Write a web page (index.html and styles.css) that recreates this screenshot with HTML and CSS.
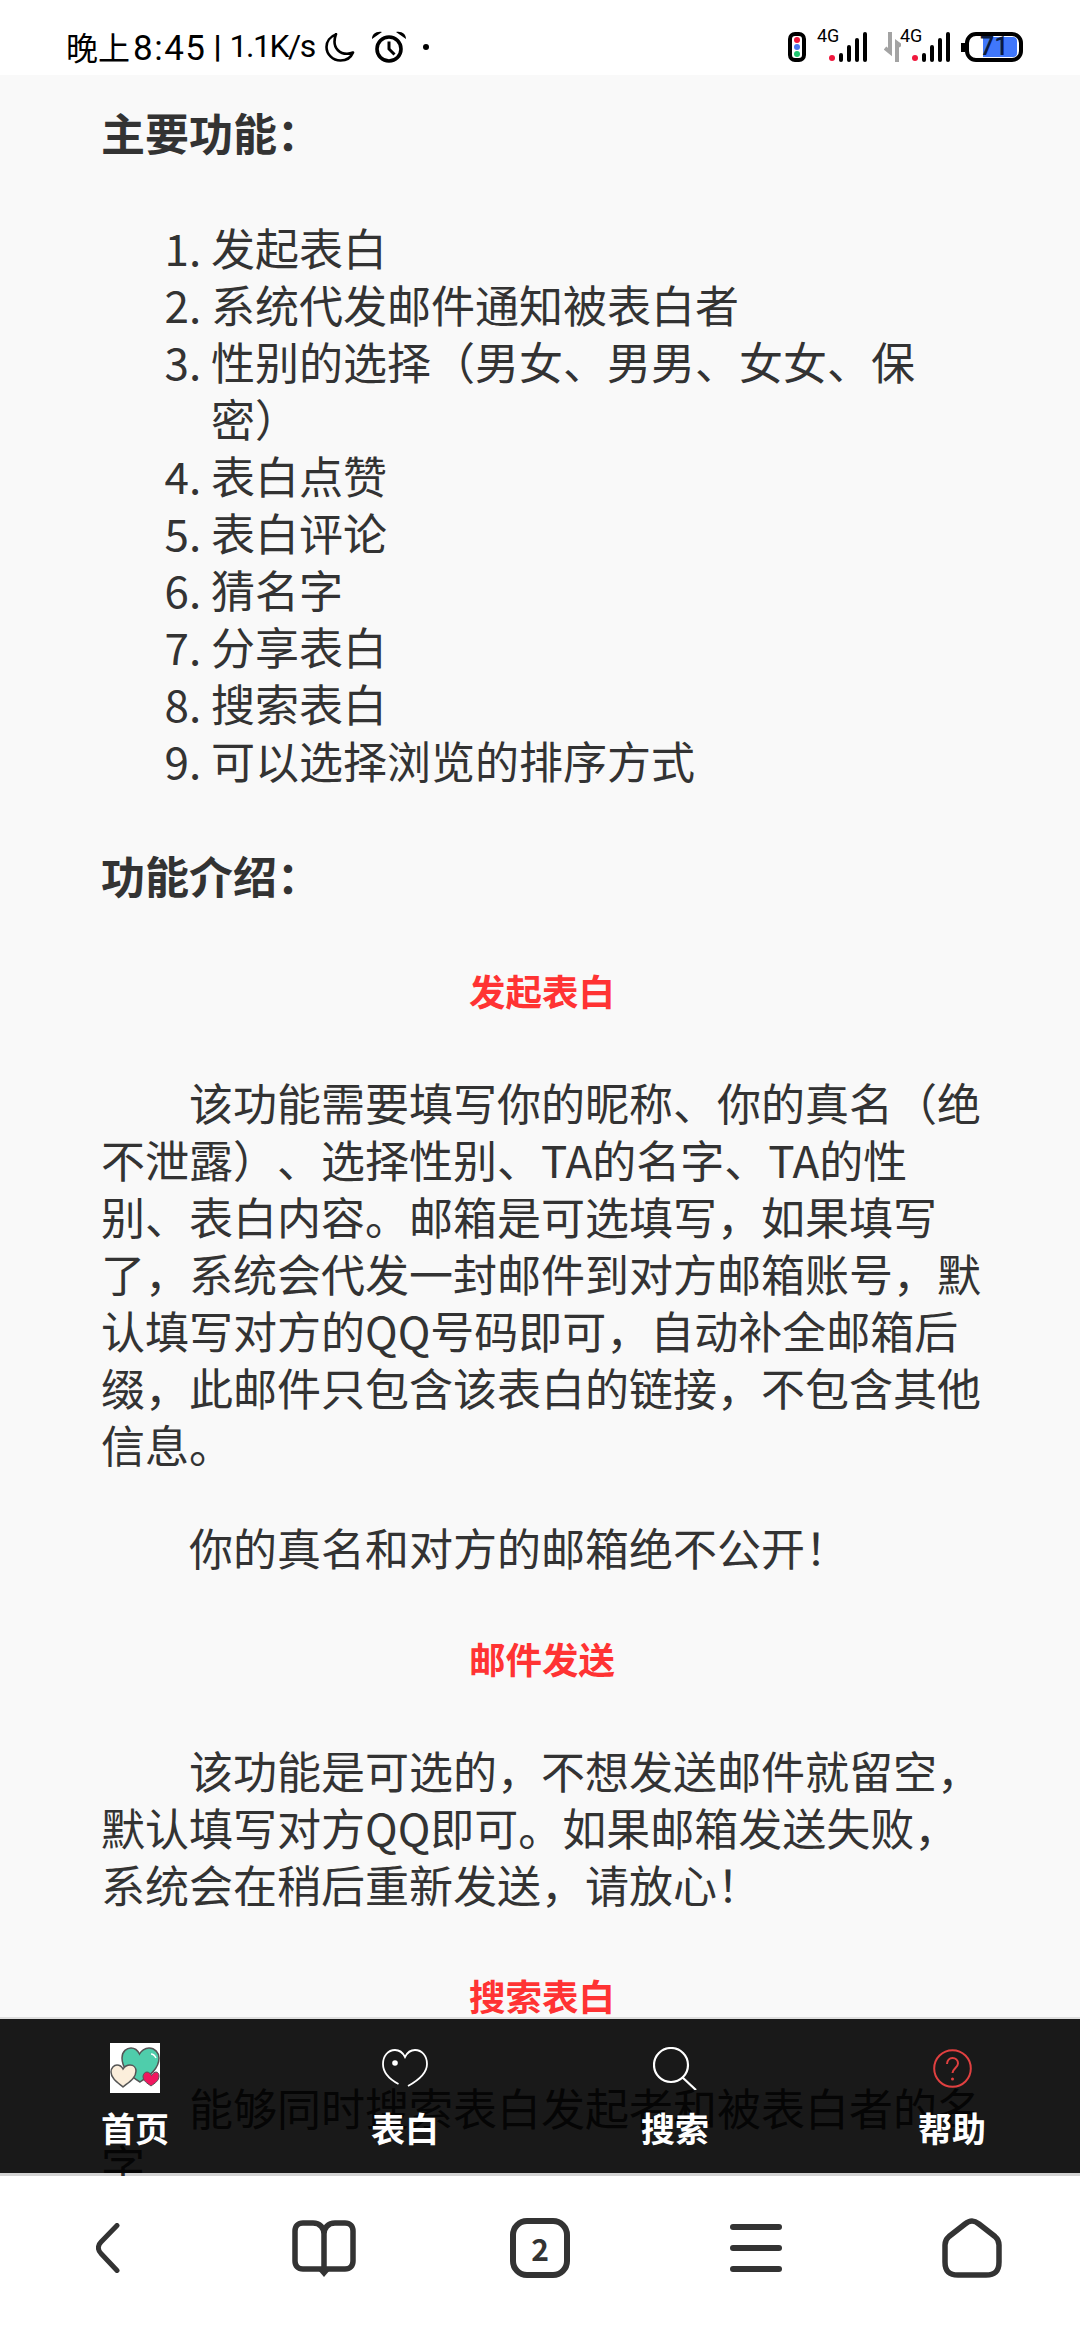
FILE: index.html
```html
<!DOCTYPE html>
<html>
<head lang="zh">
    <meta charset="UTF-8">
    <title>帮助</title>
    <link rel="stylesheet" href="styles.css">
</head>
<body>
<div id="status">
    <div class="status-left">
        <span class="clock">晚上<span class="digits">8:45</span></span>
        <span class="sep">|</span>
        <span class="speed">1.1K/s</span>
        <svg class="moon" width="30" height="29" viewBox="0 0 30 29"><path d="M11 1.500C5 3.500 1.500 8.500 1.500 14c0 7 6 13.500 14 13.500 5.500 0 10.500-3 12.500-8-2 1-4 1.300-6 1.300-7.500 0-12.500-5.500-12.500-12 0-2.500.5-5 1.500-7.800z" fill="none" stroke="#000" stroke-width="2.600" stroke-linejoin="round"/></svg>
        <svg class="alarm" width="34" height="32" viewBox="0 0 34 32"><circle cx="17" cy="18" r="12" fill="none" stroke="#000" stroke-width="3.600"/><path d="M17 10.500V18l5.500 5.500" fill="none" stroke="#000" stroke-width="3"/><path d="M0 8C0 3 4 0 10 1zM34 8c0-5-4-8-10-7z" fill="#000"/></svg>
        <span class="dot"></span>
    </div>
    <div class="status-right">
        <svg class="light" width="18" height="30" viewBox="0 0 18 30"><rect x="2" y="2" width="14" height="26" rx="5" fill="#fff" stroke="#000" stroke-width="4"/><circle cx="9" cy="8" r="3" fill="#f0173c"/><circle cx="9" cy="15" r="3" fill="#4a76f0"/><circle cx="9" cy="22" r="3" fill="#1fc56e"/></svg>
        <div class="signal">
            <svg width="52" height="34" viewBox="0 0 52 34"><circle cx="15" cy="30" r="3" fill="#f0173c"/><rect x="22" y="25" width="4" height="9" rx="2"/><rect x="30" y="17" width="4" height="17" rx="2"/><rect x="38" y="10" width="4" height="24" rx="2"/><rect x="46" y="4" width="4" height="30" rx="2"/></svg>
            <span class="net">4G</span>
        </div>
        <svg class="arrows" width="17" height="30" viewBox="0 0 17 30"><path d="M6 0v20L1 16M13 30V11l4 3" fill="none" stroke="#a3a3a3" stroke-width="4"/></svg>
        <div class="signal signal-two">
            <svg width="52" height="34" viewBox="0 0 52 34"><circle cx="15" cy="30" r="3" fill="#f0173c"/><rect x="22" y="25" width="4" height="9" rx="2"/><rect x="30" y="17" width="4" height="17" rx="2"/><rect x="38" y="10" width="4" height="24" rx="2"/><rect x="46" y="4" width="4" height="30" rx="2"/></svg>
            <span class="net">4G</span>
        </div>
        <div class="battery">
            <span class="cap"></span>
            <div class="shell">
                <div class="level"></div>
                <span class="num">71</span>
            </div>
        </div>
    </div>
</div>

<div id="page">
    <div id="content">
        <h3 class="first">主要功能：</h3>
        <ol>
            <li>发起表白</li>
            <li>系统代发邮件通知被表白者</li>
            <li>性别的选择（男女、男男、女女、保密）</li>
            <li>表白点赞</li>
            <li>表白评论</li>
            <li>猜名字</li>
            <li>分享表白</li>
            <li>搜索表白</li>
            <li>可以选择浏览的排序方式</li>
        </ol>
        <h3>功能介绍：</h3>
        <h4>发起表白</h4>
        <p>该功能需要填写你的昵称、你的真名（绝不泄露）、选择性别、TA的名字、TA的性别、表白内容。邮箱是可选填写，如果填写了，系统会代发一封邮件到对方邮箱账号，默认填写对方的QQ号码即可，自动补全邮箱后缀，此邮件只包含该表白的链接，不包含其他信息。</p>
        <p>你的真名和对方的邮箱绝不公开！</p>
        <h4>邮件发送</h4>
        <p>该功能是可选的，不想发送邮件就留空，默认填写对方QQ即可。如果邮箱发送失败，系统会在稍后重新发送，请放心！</p>
        <h4>搜索表白</h4>
        <p>能够同时搜索表白发起者和被表白者的名字</p>
    </div>
    <div id="tabbar">
        <div class="tab">
            <div class="tab-icon">
                <svg width="50" height="50" viewBox="0 0 50 50">
                    <rect width="50" height="50" fill="#fff"/>
                    <path d="M30 39C20 33 12 26 12 15 12 8 17 5 21 5c4 0 7 3 8.500 6C31 8 35 5 39 5c6 0 10 5 10 10 0 11-10 18-19 24z" fill="#4fcdab" stroke="#555" stroke-width="1.500"/>
                    <path d="M41 11c2 0 4 2 5 4" fill="none" stroke="#fff" stroke-width="1.500"/>
                    <path d="M13 44C7 39 1 35 1 29c0-4 3-7 6-7 3 0 5 2 6 4 2-3 4-4 7-4 4 0 6 3 6 6 0 7-7 11-13 16z" fill="#fbeedb" stroke="#555" stroke-width="1.500"/>
                    <path d="M41 43c-4-3-8-5-8-9.500 0-2.500 2-4.500 4-4.500s4 2 4.500 3.500C43 30 45 29 46 29c2 0 3 2 3 4 0 5-4 7-8 10z" fill="#f0175f" stroke="#555" stroke-width="1"/>
                </svg>
            </div>
            <span>首页</span>
        </div>
        <div class="tab">
            <div class="tab-icon">
                <svg width="46" height="38" viewBox="0 0 46 38"><path d="M16.500 35C7 30 1 24 1 15 1 7 6 1 13 1c4 0 8 3 10 7 2-4 6-7 10-7 7 0 12 6 12 14 0 9-8 16-19 22" fill="none" stroke="#fff" stroke-width="1.800"/><circle cx="13" cy="14" r="2.800" fill="#fff"/></svg>
            </div>
            <span>表白</span>
        </div>
        <div class="tab">
            <div class="tab-icon">
                <svg width="44" height="43" viewBox="0 0 44 43"><circle cx="18" cy="18" r="17" fill="none" stroke="#fff" stroke-width="2.200"/><path d="M29 30l14 13" stroke="#fff" stroke-width="2.200"/></svg>
            </div>
            <span>搜索</span>
        </div>
        <div class="tab tab-help">
            <div class="tab-icon">
                <svg width="39" height="39" viewBox="0 0 39 39"><circle cx="19.500" cy="19.500" r="18.300" fill="none" stroke="#e04040" stroke-width="2"/><path d="M14 15c0-3.500 2.500-6 5.500-6s5.500 2 5.500 5.500c0 4-5.500 5-5.500 9.500" fill="none" stroke="#e04040" stroke-width="2"/><circle cx="19.500" cy="30" r="1.500" fill="#e04040"/></svg>
            </div>
            <span>帮助</span>
        </div>
    </div>
</div>

<div id="browser">
    <svg width="24" height="50" viewBox="0 0 24 50"><path d="M21 2.500L5 19c-3.500 3.500-3.500 8 0 11.500L21 47.500" fill="none" stroke="#333" stroke-width="5" stroke-linecap="round"/></svg>
    <svg width="64" height="57" viewBox="0 0 64 57"><path d="M32 49H11c-5 0-8-3-8-8V11c0-5 3-8 8-8h10c7 0 11 5 11 11zM32 49h21c5 0 8-3 8-8V11c0-5-3-8-8-8H43c-7 0-11 5-11 11z" fill="none" stroke="#333" stroke-width="5.500" stroke-linejoin="round"/><path d="M26 50h12l-6 7z" fill="#333"/></svg>
    <div class="tabs-count"><span>2</span></div>
    <div class="menu"><i></i><i></i><i></i></div>
    <svg width="60" height="60" viewBox="0 0 60 60"><path d="M30 3c-2.500 0-4.500 1-7 3L7 18.500C4 21 3 23 3 27v17c0 9 4 13 13 13h28c9 0 13-4 13-13V27c0-4-1-6-4-8.500L37 6c-2.500-2-4.500-3-7-3z" fill="none" stroke="#333" stroke-width="5.500" stroke-linejoin="round"/></svg>
</div>
</body>
</html>
```

FILE: styles.css
```css
*{
    margin: 0;
    padding: 0;
    box-sizing: border-box;
}
html,body{
    width: 1080px;
    height: 2340px;
    overflow: hidden;
    background: #fff;
}
body{
    display: flex;
    flex-direction: column;
    font-family: "Noto Sans CJK SC", "Noto Sans", sans-serif;
}
#status{
    height: 75px;
    flex: none;
    padding: 22px 57px 0 66px;
    display: flex;
    justify-content: space-between;
    background: #fff;
    color: #000;
}
.status-left{
    height: 47px;
    display: flex;
    align-items: center;
    font-family: "Roboto", "Noto Sans CJK SC", sans-serif;
    font-size: 32px;
}
.digits{
    margin-left: 3px;
    font-size: 35px;
    letter-spacing: 1.500px;
}
.sep{
    margin-left: 7px;
    font-weight: bold;
}
.speed{
    margin-left: 8px;
    letter-spacing: -1.5px;
}
.moon{
    margin: 3px 0 0 10px;
}
.alarm{
    margin: 3px 0 0 17px;
}
.dot{
    width: 6px;
    height: 6px;
    border-radius: 50%;
    background: #000;
    margin: 3px 0 0 17px;
}
.status-right{
    height: 34px;
    margin-top: 6px;
    display: flex;
    align-items: flex-end;
}
.signal{
    position: relative;
    display: flex;
    margin-left: 11px;
}
.net{
    position: absolute;
    left: 0;
    top: -3px;
    font-family: "Roboto", sans-serif;
    font-size: 18px;
    line-height: 21px;
}
.arrows{
    margin-left: 15px;
}
.signal-two{
    margin-left: -1px;
}
.battery{
    display: flex;
    align-items: center;
    margin-left: 9px;
}
.cap{
    width: 4px;
    height: 9px;
    background: #000;
}
.shell{
    position: relative;
    width: 58px;
    height: 30px;
    border: 4px solid #000;
    border-radius: 11px;
    padding: 1px 2px 1px 14px;
}
.level{
    height: 100%;
    border-radius: 0 4px 4px 0;
    background: #4077fb;
}
.num{
    position: absolute;
    left: 11px;
    top: -3px;
    font-family: "Roboto", sans-serif;
    font-size: 25px;
    font-weight: 500;
    line-height: 28px;
    color: #0b1c40;
}
#page{
    position: relative;
    flex: none;
    height: 2101px;
    overflow: hidden;
    background: #f9f9f9;
}
#content{
    padding: 0 97px 0 101px;
    font-size: 44px;
    line-height: 57px;
    color: #333;
    text-spacing-trim: space-all;
}
h3{
    font-size: 44px;
    font-weight: bold;
    margin: 58px 0;
}
h3.first{
    margin-top: 29px;
}
h4{
    font-size: 36.500px;
    font-weight: bold;
    color: #f33;
    text-align: center;
    margin: 54px 0 55px;
}
p{
    text-indent: 2em;
    margin: 46px 0;
}
ol{
    padding-left: 110px;
    margin: 58px 0;
}
#tabbar{
    position: absolute;
    left: 0;
    right: 0;
    top: 1942px;
    height: 159px;
    background: rgba(0,0,0,.9);
    background-clip: padding-box;
    border-top: 2px solid rgba(0,0,0,.1);
    border-bottom: 3px solid rgba(0,0,0,.15);
    display: grid;
    grid-template-columns: repeat(4, 270px);
    color: #fff;
}
.tab{
    display: flex;
    flex-direction: column;
    align-items: center;
    font-size: 34px;
    font-weight: bold;
    line-height: 44px;
}
.tab-help{
    padding-left: 14px;
}
.tab-icon{
    height: 68px;
    margin: 15px 0 4px;
    display: flex;
    align-items: center;
}
#browser{
    flex: 1;
    display: grid;
    grid-template-columns: repeat(5, 216px);
    justify-items: center;
    align-items: center;
    padding-bottom: 20px;
    background: #fff;
}
.tabs-count{
    width: 60px;
    height: 60px;
    border: 6px solid #333;
    border-radius: 17px;
    display: flex;
    align-items: center;
    justify-content: center;
    font-size: 30px;
    font-weight: bold;
    color: #333;
}
.menu{
    width: 52px;
    height: 48px;
    display: flex;
    flex-direction: column;
    justify-content: space-between;
}
.menu i{
    height: 6px;
    border-radius: 3px;
    background: #333;
}
```
